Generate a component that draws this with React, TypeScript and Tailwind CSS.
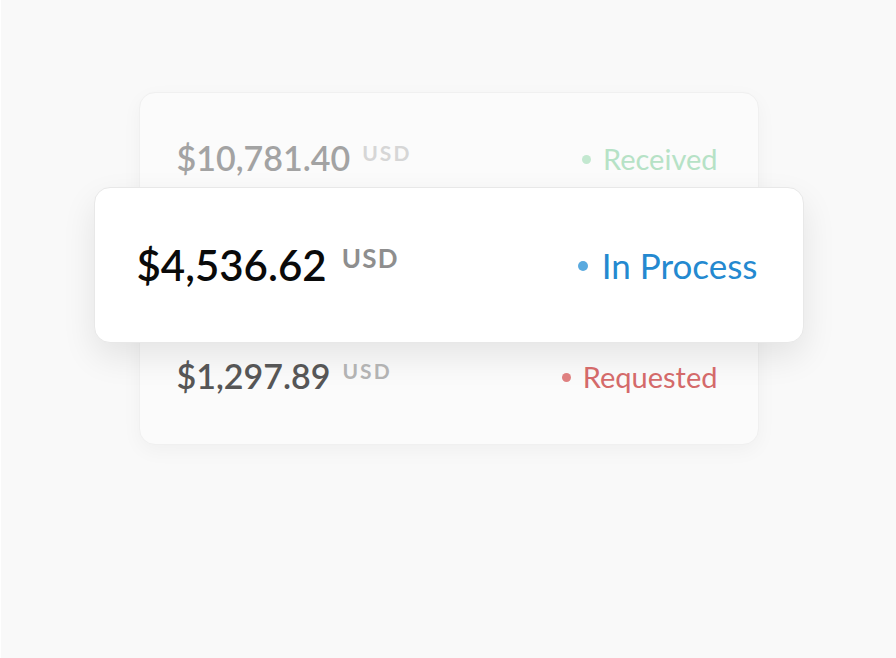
const rows = {
    received: { amount: "$10,781.40", status: "Received" },
    inProcess: { amount: "$4,536.62", status: "In Process" },
    requested: { amount: "$1,297.89", status: "Requested" },
};

const font = { fontFamily: "Lato, 'Liberation Sans', sans-serif" };

export default function App() {
    return (
        <div className="min-h-screen w-full bg-[#f9f9f9] border-l border-white flex justify-center pt-[92px]" style={font}>
            <div className="w-[620px] h-[353px] rounded-2xl bg-[#fbfbfb] border border-[#f0f0f0] shadow-[0_6px_20px_rgba(0,0,0,0.04)] pt-[48px] flex flex-col">
                {/* faded row */}
                <div className="h-[34px] flex flex-row items-center justify-between pl-[37px] pr-[40px]">
                    <div className="flex flex-row items-start gap-[12px]">
                        <span className="text-[34px] leading-none font-semibold text-[#a3a3a3]">{rows.received.amount}</span>
                        <span className="text-[21px] leading-none font-bold tracking-[0.1em] text-[#d6d6d6] mt-[1px]">USD</span>
                    </div>
                    <div className="flex flex-row items-center gap-[12px]">
                        <span className="w-[9px] h-[9px] rounded-full bg-[#c3e8d0] mt-[3px]"></span>
                        <span className="text-[29px] leading-none text-[#b6e2c6]">{rows.received.status}</span>
                    </div>
                </div>

                {/* active row, sits over the card */}
                <div className="mx-[-46px] mt-[12px] h-[156px] rounded-2xl bg-white border border-[#e8e8e8] shadow-[0_14px_34px_rgba(0,0,0,0.09)] flex flex-row items-center justify-between pl-[42px] pr-[45px]">
                    <div className="flex flex-row items-start gap-[15px]">
                        <span className="text-[42px] leading-none font-semibold text-[#0a0a0a]">{rows.inProcess.amount}</span>
                        <span className="text-[26px] leading-none font-bold tracking-[0.05em] text-[#8e8e8e] mt-[1px]">USD</span>
                    </div>
                    <div className="flex flex-row items-center gap-[14px]">
                        <span className="w-[10px] h-[10px] rounded-full bg-[#5aaadf] mt-[2px]"></span>
                        <span className="text-[35px] leading-none text-[#2489d0]">{rows.inProcess.status}</span>
                    </div>
                </div>

                <div className="mt-[16px] h-[34px] flex flex-row items-center justify-between pl-[37px] pr-[40px]">
                    <div className="flex flex-row items-start gap-[12px]">
                        <span className="text-[34px] leading-none font-semibold text-[#565656]">{rows.requested.amount}</span>
                        <span className="text-[21px] leading-none font-bold tracking-[0.1em] text-[#b3b3b3] mt-[1px]">USD</span>
                    </div>
                    <div className="flex flex-row items-center gap-[12px]">
                        <span className="w-[9px] h-[9px] rounded-full bg-[#df8080] mt-[3px]"></span>
                        <span className="text-[29px] leading-none text-[#d46a6a]">{rows.requested.status}</span>
                    </div>
                </div>
            </div>
        </div>
    );
}
